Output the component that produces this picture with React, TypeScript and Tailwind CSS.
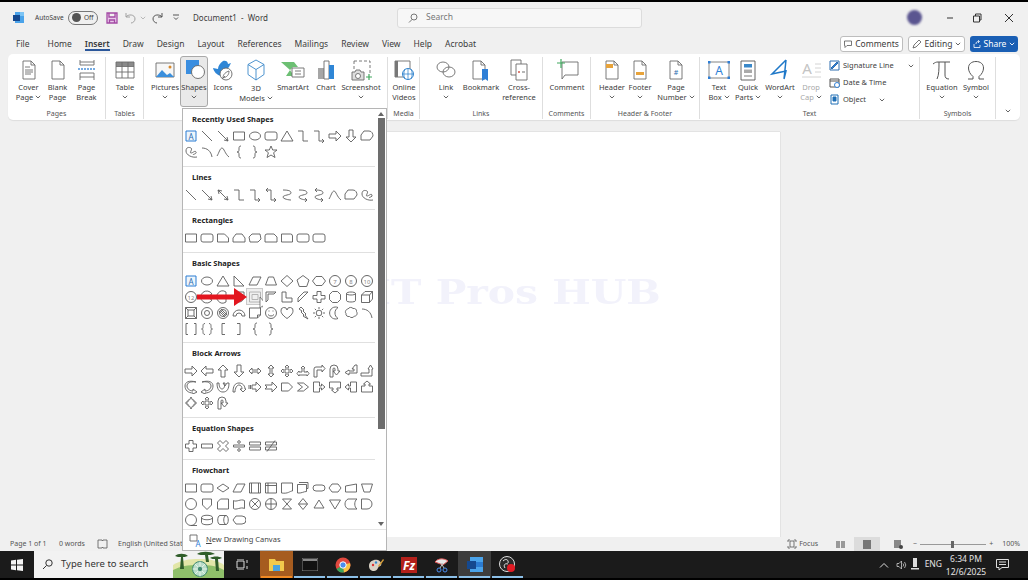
import type { ReactNode } from "react";

const c = (x: number, y: number, r: number) =>
  `M${x - r} ${y}a${r} ${r} 0 1 0 ${2 * r} 0a${r} ${r} 0 1 0 ${-2 * r} 0`;

// outline paths for the shape gallery, all on a 14x14 box
const SHAPES: Record<string, string> = {
  line: "M2 2L12 12",
  arrow: "M2 2L12 12M12 12l-4-1M12 12l-1-4",
  dbl: "M2 2L12 12M2 2l4 1M2 2l1 4M12 12l-4-1M12 12l-1-4",
  rect: "M1.5 3h11v8h-11z",
  ellipse: "M1.5 7a5.5 4 0 1 0 11 0a5.5 4 0 1 0-11 0",
  round: "M3 3h8a2 2 0 0 1 2 2v4a2 2 0 0 1-2 2H3a2 2 0 0 1-2-2V5a2 2 0 0 1 2-2z",
  tri: "M7 2l6 10H1z",
  elbow: "M2 2h5v10h5",
  elbowA: "M2 2h5v10h5M12 12l-2-2M12 12l-2 2",
  elbowD: "M2 2h5v10h5M2 2l2-2M2 2l2 2M12 12l-2-2M12 12l-2 2",
  curveC: "M3 2c6 0 8 1 8 3S3 7 3 9s6 3 8 3",
  curveA: "M3 2c6 0 8 1 8 3S3 7 3 9s6 3 8 3M11 12l-2-2M11 12l-2 2",
  curveD: "M3 2c6 0 8 1 8 3S3 7 3 9s6 3 8 3M11 12l-2-2M11 12l-2 2M3 2l2-2M3 2l2 2",
  arc: "M2 3c5 0 9 3 10 9",
  curve: "M1 11C3 8 4 3 6 3s3 6 7 9",
  free: "M1 11V6l3-4h5c3 0 4 3 4 5l-3 4z",
  scribble: "M13 12C8 13 2 10 2 6s3-4 5-3-2 5 0 5 4-3 5-1-3 2-3 3",
  lbrace: "M9 1C7 1 7 2 7 4s0 3-2 3c2 0 2 1 2 3s0 3 2 3",
  rbrace: "M5 1c2 0 2 1 2 3s0 3 2 3c-2 0-2 1-2 3s0 3-2 3",
  star: "M7 1l1.7 4H13l-3.4 2.7L11 12.500 7 10l-4 2.500 1.400-4.800L1 5h4.300z",
  rArrow: "M1 5h7V2l5 5-5 5V9H1z",
  lArrow: "M13 5H6V2L1 7l5 5V9h7z",
  uArrow: "M5 13V6H2l5-5 5 5H9v7z",
  dArrow: "M5 1v7H2l5 5 5-5H9V1z",
  snip1: "M1.500 3h7l4 4v4h-11z",
  snip2: "M4 3h6l3 4v4H1V7z",
  snipD: "M4 3h8l1 5-3 3H2L1 6z",
  rs: "M3 3h7l3 3v5H1V5a2 2 0 0 1 2-2z",
  r1: "M1.500 3h9a2 2 0 0 1 2 2v6h-11z",
  rtri: "M2 2v10h10z",
  para: "M5 3h8l-4 8H1z",
  trap: "M4.500 3h5l3 8h-11z",
  diamond: "M7 1.500l6 5.500-6 5.500L1 7z",
  pent: "M7 1.500l6 4.500-2.300 6.500H3.300L1 6z",
  hex: "M4 2.500h6l3.500 4.500-3.500 4.500H4L.5 7z",
  oct: "M4.500 1.500h5l3 3v5l-3 3h-5l-3-3v-5z",
  pie: "M12 4A6 6 0 1 0 12 10L7 7z",
  chord: "M10 2A6 6 0 1 0 10 12z",
  tear: "M7 2h5v5a5 5 0 1 1-5-5z",
  frame: "M1.500 2h11v10h-11zM4 4.500h6v5H4z",
  half: "M2 2h10L10 4H4v6l-2 2z",
  lshape: "M2 2h4v6h6v4H2z",
  stripe: "M2 12V8l6-6h4z",
  cross: "M5 1.500h4v4h4v3.500H9v3.500H5V9H1V5.500h4z",
  can: "M2.500 3.500c0-2 9-2 9 0v7c0 2-9 2-9 0zM2.500 3.500c0 2 9 2 9 0",
  cube: "M1.500 5h8v7.500h-8zM1.500 5L5 1.500h7.500V9L9.500 12.500M9.500 5l3-3.500",
  bevel: "M1.500 1.500h11v11h-11zM4 4h6v6H4zM1.500 1.500L4 4M12.500 1.500L10 4M1.500 12.500L4 10M12.500 12.500L10 10",
  donut: c(7, 7, 5.5) + c(7, 7, 2.5),
  no: c(7, 7, 5.5) + c(7, 7, 3.5) + "M4.500 4.500l5 5M3 5l6 6M5 3l6 6",
  block: "M1 10a6 6 0 0 1 12 0h-3a3 3 0 0 0-6 0z",
  fold: "M1.500 2h11v7l-3 3h-8zM12.500 9h-3v3",
  smile: c(7, 7, 5.5) + "M4.500 5h1M8.500 5h1M4 8.500c1.500 2 4.500 2 6 0",
  heart: "M7 12.500C2 9 1 6.500 1 5a3 3 0 0 1 6-1 3 3 0 0 1 6 1c0 1.500-1 4-6 7.500z",
  bolt: "M5 1l3 3-1 1 3 3-1 1 3 4-5-3 1-1-3-3 1-1-3-2z",
  sun: c(7, 7, 2.800) + "M7 1v2M7 11v2M1 7h2M11 7h2M2.800 2.800l1.400 1.400M9.800 9.800l1.400 1.400M2.800 11.200l1.400-1.400M9.800 4.200l1.400-1.400",
  moon: "M10 1.500a6 6 0 1 0 0 11 6.500 6.500 0 0 1 0-11z",
  cloud: "M4 3c1-2 4-2 5-.5 2-.5 4 1 3.500 3 1.500 2 0 5-2 4.500-1 2-4 2-5 .5-2 .5-4-1-3.500-3C.5 6 2 3 4 3z",
  dBracket: "M4 1.500H2v11h2M10 1.500h2v11h-2",
  dBrace: "M5 1.500C3 1.500 3 3 3 4.500S3 7 1.500 7C3 7 3 8 3 9.500s0 3 2 3M9 1.500c2 0 2 1.500 2 3S11 7 12.500 7C11 7 11 8 11 9.500s0 3-2 3",
  lBracket: "M9 1.500H6v11h3",
  rBracket: "M5 1.500h3v11H5",
  lr: "M1 7l3-3v2h6V4l3 3-3 3V8H4v2z",
  ud: "M7 1l3 3H8v6h2l-3 3-3-3h2V4H4z",
  quad: "M7 1l2 2H8v3h3V5l2 2-2 2V8H8v3h1l-2 2-2-2h1V8H3v1L1 7l2-2v1h3V3H5z",
  lru: "M7 2l2 2H8v4h3V7l2 2.500L11 12v-1H3v1L1 9.500 3 7v1h3V4H5z",
  bent: "M2 13V5a2 2 0 0 1 2-2h6V1l3 3.500L10 8V6H5v7z",
  uturn: "M2 13V5a4 4 0 0 1 8 0v2h2l-3.500 4L5 7h2V5a1 1 0 0 0-2 0v8z",
  leftUp: "M13 1v8H5v2L1 8.500 5 6v1h5V5H8l3-4z",
  bentUp: "M1 9h8V5H8l2.500-4L13 5h-1v7H1z",
  cR: "M12 2C6 1 3 3 3 6c0 3 3 5 6 5V9l4 3-4 2v-1C4 13 1 10 1 6s4-6 11-4z",
  cL: "M2 2c6-1 9 1 9 4 0 3-3 5-6 5V9l-4 3 4 2v-1c5 0 8-3 8-7S9 0 2 2z",
  cU: "M1 3c0 6 2 9 6 9s6-3 6-9l-2 0v0l-2 3-2-3h2c0 3-1 6-3 6S3 6 3 3z",
  cD: "M1 12C1 6 3 3 7 3s6 3 6 6h1l-3 3-3-3h2c0-2-1-4-3-4s-4 3-4 7z",
  striped: "M4 5h4V2l5 5-5 5V9H4zM1 5v4M2.500 5v4",
  notched: "M1 5h7V2l5 5-5 5V9H1l2-2z",
  home: "M1.500 3h7l4 4-4 4h-7z",
  chev: "M1.500 3h6l5 4-5 4h-6l5-4z",
  rCall: "M1.500 2h6v4h2V4l3.500 3-3.500 3V8h-2v4h-6z",
  dCall: "M1.500 2h11v6H9v2h1.500L7 13 3.500 10H5V8H1.500z",
  lCall: "M12.500 2h-6v4h-2V4L1 7l3.500 3V8h2v4h6z",
  uCall: "M1.500 12h11V6H9V4h1.500L7 1 3.500 4H5v2H1.500z",
  udCall: "M4 4h1.500L7 1l1.500 3H10v2h2v2h-2v2H8.500L7 13l-1.500-3H4V8H2V6h2z",
  plus: "M5 1.500h4v3.500h3.500v4H9v3.500H5V9H1.500V5H5z",
  minus: "M1.500 5h11v4h-11z",
  times: "M1.500 4L4 1.500l3 3 3-3L12.500 4l-3 3 3 3-2.500 2.500-3-3-3 3L1.500 10l3-3z",
  div: "M1.500 6h11v2h-11z" + c(7, 3, 1.3) + c(7, 11, 1.3),
  eq: "M1.500 3h11v3h-11zM1.500 8h11v3h-11z",
  neq: "M1.500 3h11v3h-11zM1.500 8h11v3h-11zM3 12.500L11 1.500",
  decision: "M7 3l6 4-6 4-6-4z",
  predef: "M1.500 2h11v10h-11zM3.500 2v10M10.500 2v10",
  internal: "M1.500 2h11v10h-11zM1.500 4.500h11M4 2v10",
  doc: "M1.500 2h11v8c-3 0-4 3-11 2z",
  multi: "M3 1.500h9v6h-1M1.500 3.500h9v7c-3 0-5 2-9 1.500z",
  term: "M4 4h6a3 3 0 0 1 0 6H4a3 3 0 0 1 0-6z",
  prep: "M4 3h6l3 4-3 4H4L1 7z",
  manIn: "M1.500 5l11-2v8h-11z",
  manOp: "M1.500 3h11l-2.500 8H4z",
  conn: c(7, 7, 5.5),
  off: "M2.500 2h9v6L7 12.500 2.500 8z",
  card: "M4.500 2h8v10h-11V5z",
  tape: "M1.500 3.500c3 2 7-2 11 0v8c-4-2-8 2-11 0z",
  sum: c(7, 7, 5.5) + "M3.200 3.200l7.600 7.600M10.800 3.200l-7.600 7.600",
  or: c(7, 7, 5.5) + "M1.500 7h11M7 1.500v11",
  collate: "M2.500 2h9L2.500 12h9z",
  sort: "M7 1.500l4.500 5.500L7 12.500 2.500 7zM2.500 7h9",
  extract: "M7 3l5 8H2z",
  merge: "M1.500 3h11L7 12z",
  stored: "M4 2h9c-3 2-3 8 0 10H4C0 10 0 4 4 2z",
  delay: "M1.500 2H7a5 5 0 0 1 0 10H1.500z",
  seq: c(7, 7, 5.5) + "M7 12.500h6",
  disk: "M1.500 4.500c0-3 11-3 11 0v5c0 3-11 3-11 0zM1.500 4.500c0 3 11 3 11 0",
  direct: "M4 2.500h6c3 0 3 9 0 9H4c-3 0-3-9 0-9zM10 2.500c-3 0-3 9 0 9",
  display: "M1 7l3-4h6a4 4 0 0 1 0 8H4z",
};

const Shape = ({ name }: { name: string }) => {
  if (name === "text") {
    return (
      <svg className="h-[14px] w-[14px]" viewBox="0 0 14 14" fill="none">
        <path d="M2 2h10v10H2z" fill="#eef5fb" stroke="#2b7cd3" />
        <text x="7" y="10.500" textAnchor="middle" fontSize="8" fill="#2b6cb0" stroke="none">A</text>
      </svg>
    );
  }
  if (name.startsWith("#")) {
    return (
      <svg className="h-[14px] w-[14px]" viewBox="0 0 14 14" fill="none" stroke="#666">
        <circle cx="7" cy="7" r="5.500" />
        <text x="7" y="9.500" textAnchor="middle" fontSize="6" fill="#888" stroke="none">{name.slice(1)}</text>
      </svg>
    );
  }
  return (
    <svg className="h-[14px] w-[14px]" viewBox="0 0 14 14" fill="none" stroke="#5c5c5c" strokeWidth={0.9}>
      <path d={SHAPES[name]} />
    </svg>
  );
};

const SECTIONS: { title: string; items: string[]; first?: boolean; pb: string }[] = [
  {
    title: "Recently Used Shapes",
    first: true,
    pb: "pb-[6px]",
    items: ["text", "line", "arrow", "rect", "ellipse", "round", "tri", "elbow", "elbowA", "rArrow", "dArrow", "free", "scribble", "arc", "curve", "lbrace", "rbrace", "star"],
  },
  {
    title: "Lines",
    pb: "pb-[6px]",
    items: ["line", "arrow", "dbl", "elbow", "elbowA", "elbowD", "curveC", "curveA", "curveD", "curve", "free", "scribble"],
  },
  {
    title: "Rectangles",
    pb: "pb-[6px]",
    items: ["rect", "round", "snip1", "snip2", "snipD", "rs", "r1", "round", "round"],
  },
  {
    title: "Basic Shapes",
    pb: "pb-[5px]",
    items: [
      "text", "ellipse", "tri", "rtri", "para", "trap", "diamond", "pent", "hex", "#7", "#8", "#10",
      "#12", "pie", "chord", "tear", "frame", "half", "lshape", "stripe", "cross", "oct", "can", "cube",
      "bevel", "donut", "no", "block", "fold", "smile", "heart", "bolt", "sun", "moon", "cloud", "arc",
      "dBracket", "dBrace", "lBracket", "rBracket", "lbrace", "rbrace",
    ],
  },
  {
    title: "Block Arrows",
    pb: "pb-[6px]",
    items: [
      "rArrow", "lArrow", "uArrow", "dArrow", "lr", "ud", "quad", "lru", "bent", "uturn", "leftUp", "bentUp",
      "cR", "cL", "cU", "cD", "striped", "notched", "home", "chev", "rCall", "dCall", "lCall", "uCall",
      "udCall", "quad", "uturn",
    ],
  },
  {
    title: "Equation Shapes",
    pb: "pb-[5px]",
    items: ["plus", "minus", "times", "div", "eq", "neq"],
  },
  {
    title: "Flowchart",
    pb: "",
    items: [
      "rect", "round", "decision", "para", "predef", "internal", "doc", "multi", "term", "prep", "manIn", "manOp",
      "conn", "off", "card", "tape", "sum", "or", "collate", "sort", "extract", "merge", "stored", "delay",
      "seq", "disk", "direct", "display",
    ],
  },
];

const Chev = ({ className = "" }: { className?: string }) => (
  <svg className={`inline-block h-[4px] w-[6px] ${className}`} viewBox="0 0 6 4" fill="none" stroke="#555" strokeWidth={0.9}>
    <path d="M.8.8L3 3l2.200-2.200" />
  </svg>
);

const Ic = ({ w = 22, h = 22, children }: { w?: number; h?: number; children: ReactNode }) => (
  <svg width={w} height={h} viewBox={`0 0 ${w} ${h}`} fill="none" stroke="#6b6b6b" strokeWidth={0.9}>
    {children}
  </svg>
);

const Page = ({ x = 5 }: { x?: number }) => (
  <path d={`M${x} 2h8l4 4v14H${x}zM${x + 8} 2v4h4`} fill="#fff" />
);

const icons: Record<string, ReactNode> = {
  cover: <Ic><Page /><path d="M7 8h5M7 11h8M7 13h8M7 15h6" /></Ic>,
  blank: <Ic><Page /></Ic>,
  pbreak: <Ic><path d="M4 1v5h14V1M4 21v-7h14v7M4 3h14M4 18h14" /><path d="M2 10h18" stroke="#4a90d9" strokeDasharray="2 1" strokeWidth={1.400} /></Ic>,
  table: (
    <Ic>
      <path d="M2 3h18v4H2z" fill="#8a8a8a" stroke="none" />
      <path d="M2 3h18v16H2zM2 7.500h18M2 13h18M8 3v16M14 3v16" />
    </Ic>
  ),
  pictures: (
    <Ic>
      <path d="M2 4h18v14H2z" fill="#f7f7f7" />
      <path d="M2 18l6-7 5 5 3-2 4 4z" fill="#3b8fdc" stroke="none" />
      <circle cx="16" cy="8" r="1.500" fill="#d9892b" stroke="none" />
    </Ic>
  ),
  shapes: (
    <Ic>
      <path d="M3 1h13v14H3z" fill="#3a8ee0" stroke="none" />
      <circle cx="15" cy="13" r="6.500" fill="#fff" stroke="#666" />
    </Ic>
  ),
  icons: (
    <Ic>
      <path d="M1 9l5 1c0-3 2-6 5-8 2-1 5 0 5 3l3-1-2 4-8 9c-4-1-7-4-8-8z" fill="#2f86d6" stroke="none" />
      <circle cx="14" cy="15" r="6" fill="#fff" stroke="#666" />
      <path d="M11 19c0-4 3-6 6-7 0 4-2 6-6 7zM10 20l3-3" />
    </Ic>
  ),
  d3: (
    <Ic>
      <path d="M11 1l8 4.500v10L11 21l-8-5.500v-10zM3 5.500l8 5 8-5M11 10.500V21" stroke="#3a88c9" fill="#fff" />
    </Ic>
  ),
  smart: (
    <Ic w={26}>
      <path d="M1 3h13l4 5H13l-3 3 4 6H6l4-6z" fill="#6cbf73" stroke="none" />
      <path d="M12 9h12v9H12z" fill="#fff" />
      <path d="M15 12h6M15 15h6" />
    </Ic>
  ),
  chart: (
    <Ic>
      <path d="M3 9h6v11H3z" fill="#a6a6a6" stroke="none" />
      <path d="M9 2h5v18H9z" fill="#fff" />
      <path d="M14 6h5v14h-5z" fill="#2f86d6" stroke="none" />
    </Ic>
  ),
  shot: (
    <Ic w={24}>
      <path d="M5 2h16v12" strokeDasharray="3 2" />
      <path d="M5 2v8" strokeDasharray="3 2" />
      <path d="M3 13h3l1-2h4l1 2h3v8H3z" fill="#ddd" />
      <circle cx="9" cy="17" r="2.500" fill="#fff" />
      <path d="M20 15v6M17 18h6" stroke="#41a85f" strokeWidth={1.200} />
    </Ic>
  ),
  video: (
    <Ic w={24}>
      <path d="M3 2h15v16H3z" fill="#fff" />
      <path d="M3 2h3v16H3z" fill="#777" stroke="none" />
      <circle cx="16" cy="15" r="5.500" fill="#fff" stroke="#1f78c8" />
      <path d="M10.500 15h11M16 9.500v11M13 10c-1.500 3-1.500 7 0 10M19 10c1.500 3 1.500 7 0 10" stroke="#1f78c8" strokeWidth={0.7} />
    </Ic>
  ),
  link: (
    <Ic>
      <ellipse cx="8" cy="8" rx="6" ry="5" />
      <ellipse cx="14" cy="13" rx="6" ry="5" />
    </Ic>
  ),
  bookmark: <Ic><Page x={3} /><path d="M12 10h6v12l-3-2-3 2z" fill="#2f7fd6" stroke="none" /></Ic>,
  cross: (
    <Ic>
      <path d="M3 1h10v15H3z" fill="#fff" />
      <path d="M8 5h11v16H8z" fill="#fff" />
      <path d="M10 13h2" stroke="#d4574a" strokeWidth={1.400} />
      <path d="M14 13h3" stroke="#999" strokeWidth={1.400} />
    </Ic>
  ),
  comment: (
    <Ic w={24}>
      <path d="M7 3h16v13H10l-3 4z" fill="#fff" />
      <path d="M6 0v9M2 4h8" stroke="#41a85f" strokeWidth={1.200} />
    </Ic>
  ),
  header: <Ic><Page /><path d="M5 5h7v4H5z" fill="#e8a33a" stroke="none" /></Ic>,
  footer: <Ic><Page /><path d="M7 13h8v3H7z" fill="#e8a33a" stroke="none" /></Ic>,
  num: <Ic><Page /><text x="11" y="16" fontSize="7" textAnchor="middle" fill="#2f6fb0" stroke="none">#</text></Ic>,
  tbox: (
    <Ic>
      <path d="M1 3h20v16H1z" fill="#fff" stroke="#777" />
      <path d="M0 2h2.500v2.500H0zM19.500 2H22v2.500h-2.500zM0 17.500h2.500V20H0zM19.500 17.500H22V20h-2.500z" fill="#2f7fd6" stroke="none" />
      <text x="11" y="16" fontSize="12" textAnchor="middle" fill="#2f7fd6" stroke="none">A</text>
    </Ic>
  ),
  quick: (
    <Ic>
      <path d="M4 2h14v19H4z" fill="#fff" stroke="#555" />
      <path d="M7 5h8v3.500H7z" fill="#3a88c9" stroke="none" />
      <path d="M7 10.500h8v3.500H7z" fill="#aaa" stroke="none" />
      <path d="M7 17h8" />
    </Ic>
  ),
  wordart: <Ic><path d="M17 1L3 15l14-3-2 8M17 1l-2 19" stroke="#1f78c8" strokeWidth={1.500} /></Ic>,
  dropcap: (
    <Ic>
      <text x="7" y="15" fontSize="15" textAnchor="middle" fill="#c4c4c4" stroke="none">A</text>
      <path d="M15 5h6M15 9h6M15 13h6M2 18h19" stroke="#cfcfcf" />
    </Ic>
  ),
  pi: (
    <Ic w={20}>
      <path d="M1 5c2-1.500 3-2 5-2h12M7 3c0 7 0 13-2 17M13 3v13c0 2.500 1 4 4 4" stroke="#555" strokeWidth={1} />
    </Ic>
  ),
  omega: (
    <Ic w={20}>
      <path d="M2 20h5v-2.500C4 15 2.500 12 2.500 9c0-4 3-6.500 7.500-6.500s7.500 2.500 7.500 6.500c0 3-1.500 6-4.500 8.500V20h5" stroke="#555" strokeWidth={1} />
    </Ic>
  ),
};

type BtnProps = {
  w: string;
  icon: ReactNode;
  l1: string;
  l2?: string;
  chev?: boolean;
  muted?: boolean;
  active?: boolean;
  shift?: boolean;
};

const RibbonBtn = ({ w, icon, l1, l2, chev, muted, active, shift }: BtnProps) => (
  <div
    className={`flex h-[49px] shrink-0 flex-col items-center leading-[10px] ${w} ${muted ? "text-[#a8a8a8]" : ""} ${
      active ? "-mt-px h-[51px] rounded-[3px] border border-[#a9a9a9] bg-[#e9e9e9]" : ""
    }`}
  >
    <div className="flex h-[25px] w-full items-center justify-center">{icon}</div>
    <div className={`whitespace-nowrap ${shift ? "mt-px" : ""}`}>{l1}</div>
    <div className="flex h-[10px] items-center gap-[2px] whitespace-nowrap">
      {l2}
      {chev && <Chev />}
    </div>
  </div>
);

const Group = ({ w, label, pl, children }: { w: string; label: string; pl: string; children: ReactNode }) => (
  <div className={`flex h-[62px] shrink-0 flex-col border-r border-[#dedede] ${w}`}>
    <div className={`flex h-[51px] ${pl}`}>{children}</div>
    <div className="h-[11px] text-center text-[7px] leading-[11px] text-[#555]">{label}</div>
  </div>
);

const SmallRow = ({ icon, text, chevClass }: { icon: ReactNode; text: string; chevClass?: string }) => (
  <div className="flex h-[17px] items-center gap-[3px] whitespace-nowrap">
    <span className="w-[11px]">{icon}</span>
    {text}
    {chevClass && <Chev className={chevClass} />}
  </div>
);

const TABS = ["File", "Home", "Insert", "Draw", "Design", "Layout", "References", "Mailings", "Review", "View", "Help", "Acrobat"];

const ShapesMenu = () => (
  <div className="absolute left-[182px] top-[108px] flex h-[443px] w-[205px] flex-col border border-[#b5b5b5] bg-white text-[#222]">
    <div className="flex flex-1">
      <div className="w-[193px]">
        {SECTIONS.map((s) => (
          <div key={s.title} className={`${s.pb} ${s.title === "Flowchart" ? "" : "border-b border-[#e0e0e0]"}`}>
            <div className={`pl-[9px] text-[7.500px] font-bold leading-[20px] ${s.first ? "h-[19px]" : "h-[20px]"}`}>{s.title}</div>
            <div className="grid grid-cols-[repeat(12,16px)]">
              {s.items.map((name, i) => (
                <div key={i} className="flex h-4 w-4 items-center justify-center">
                  <Shape name={name} />
                </div>
              ))}
            </div>
          </div>
        ))}
      </div>
      <div className="ml-[1px] flex w-[10px] flex-col items-center">
        <div className="mt-[3px] h-0 w-0 border-x-[3px] border-b-[4px] border-x-transparent border-b-[#666]" />
        <div className="mt-[2px] h-[311px] w-[7px] bg-[#6d6d6d]" />
        <div className="flex-1" />
        <div className="mb-[3px] h-0 w-0 border-x-[3px] border-t-[4px] border-x-transparent border-t-[#666]" />
      </div>
    </div>
    <div className="flex h-[21px] items-center gap-[4px] border-t border-[#e6e6e6] pl-[6px] text-[7.500px] text-[#444]">
      <svg width="13" height="13" viewBox="0 0 13 13" fill="none" stroke="#666" strokeWidth={0.9}>
        <path d="M1 1h7v6H1z" />
        <text x="9" y="12.500" fontSize="8" fill="#2f7fd6" stroke="none" textAnchor="middle">A</text>
      </svg>
      <span><span className="underline">N</span>ew Drawing Canvas</span>
    </div>
    {/* hovered shape, cursor and the red arrow added on top of the gallery */}
    <div className="absolute left-[63px] top-[179px] h-[17px] w-[17px] border border-[#c9c9c9] bg-[#e4e4e4]/60" />
    <svg className="absolute left-[14px] top-[178px]" width="66" height="24" viewBox="0 0 66 24">
      <path d="M0 7.500h37V1l13 9-13 9v-6.500H0z" fill="#e3161f" />
      <path d="M63 10v11l2.500-2 2 4 1.500-1-2-3.500h3z" fill="#fff" stroke="#555" strokeWidth={0.7} />
    </svg>
  </div>
);

const Task = ({ children, active, orange, line = true }: { children: ReactNode; active?: boolean; orange?: boolean; line?: boolean }) => (
  <div className={`relative flex h-full w-[33px] shrink-0 items-center justify-center ${active ? "bg-[#3d3d3d]" : ""} ${orange ? "bg-[#a65c1f]" : ""}`}>
    {children}
    {line && <div className={`absolute bottom-0 left-[1px] right-[1px] h-[2px] ${orange ? "bg-[#f08a24]" : "bg-[#8cc0e8]"}`} />}
  </div>
);

export default function App() {
  return (
    <div className="relative flex h-[580px] w-[1028px] flex-col overflow-hidden bg-black pb-[2px] pt-[2px] font-['Noto_Sans',sans-serif] text-[#3c3c3c]">
      <div className="flex min-h-0 flex-1 flex-col bg-[#f0f0f0]">
        {/* title bar */}
        <div className="flex h-[31px] shrink-0 items-center text-[8px]">
          <svg className="ml-[12px]" width="13" height="13" viewBox="0 0 13 13">
            <path d="M3 1h9v11H3z" fill="#4aa3ea" />
            <path d="M8 1h4v4H8z" fill="#7cc4f5" />
            <path d="M1 4h7v6H1z" fill="#15498f" />
          </svg>
          <span className="ml-[10px] w-[33px] text-[6.500px]">AutoSave</span>
          <div className="flex h-[14px] w-[30px] items-center rounded-full border border-[#777] pl-[3px] text-[6.500px]">
            <span className="h-[9px] w-[9px] rounded-full bg-[#555]" />
            <span className="ml-[3px]">Off</span>
          </div>
          <svg className="ml-[8px]" width="12" height="12" viewBox="0 0 12 12" fill="none" stroke="#a349a4" strokeWidth={1.300}>
            <path d="M1 1h10v10H1zM3 1v4h6V1M3.500 11V8h5v3" fill="#e8c8ea" />
          </svg>
          <svg className="ml-[7px]" width="12" height="12" viewBox="0 0 12 12" fill="none" stroke="#a0a0a0">
            <path d="M1 1v4h4M1 5c2-3 9-3 9 2 0 2-2 4-4 4" />
          </svg>
          <Chev className="ml-[3px] opacity-40" />
          <svg className="ml-[5px]" width="12" height="12" viewBox="0 0 12 12" fill="none" stroke="#555">
            <path d="M11 1v4H7M11 5C9 2 2 2 2 7c0 2 2 4 4 4" />
          </svg>
          <svg className="ml-[10px]" width="6" height="7" viewBox="0 0 6 7" fill="none" stroke="#555">
            <path d="M0 1h6M1 3.500l2 2 2-2" />
          </svg>
          <span className="ml-[14px] w-[204px]">Document1 &nbsp;-&nbsp; Word</span>
          <div className="flex h-[20px] w-[245px] items-center rounded-[3px] border border-[#dcdcdc] bg-[#f7f7f7] pl-[10px] text-[#777]">
            <svg width="10" height="10" viewBox="0 0 10 10" fill="none" stroke="#777">
              <circle cx="6" cy="4" r="3" />
              <path d="M4 6.500L1 9.500" />
            </svg>
            <span className="ml-[8px] text-[8.500px]">Search</span>
          </div>
          <div className="ml-[265px] h-[15px] w-[15px] rounded-full bg-[#5a5590] blur-[1px]" />
          <svg className="ml-[23px]" width="10" height="10" viewBox="0 0 10 10" stroke="#333">
            <path d="M2 5h6" />
          </svg>
          <svg className="ml-[17px]" width="10" height="10" viewBox="0 0 10 10" fill="none" stroke="#333">
            <path d="M1.500 3h6v6h-6zM3.500 3V1h5.500v6H7.500" />
          </svg>
          <svg className="ml-[22px]" width="10" height="10" viewBox="0 0 10 10" stroke="#333">
            <path d="M1 1l8 8M9 1L1 9" />
          </svg>
        </div>
        {/* tabs */}
        <div className="mt-[2px] flex h-[18px] shrink-0 items-center pl-[16px] pr-[10px] text-[8.500px]">
          <div className="flex gap-[13px]">
            {TABS.map((t) => (
              <span key={t} className={`relative ${t === "File" ? "mr-[5px]" : ""} ${t === "Insert" ? "font-semibold" : ""}`}>
                {t}
                {t === "Insert" && <span className="absolute -bottom-[1px] left-0 right-0 h-[2px] bg-[#2b579a]" />}
              </span>
            ))}
          </div>
          <div className="ml-auto flex h-[16px] w-[63px] items-center justify-center gap-[3px] rounded-[3px] border border-[#bdbdbd] bg-white">
            <svg width="8" height="8" viewBox="0 0 8 8" fill="none" stroke="#555" strokeWidth={0.8}>
              <path d="M.5 1h7v4.500H3L1 7.500V5.500H.5z" />
            </svg>
            Comments
          </div>
          <div className="ml-[5px] flex h-[16px] w-[57px] items-center justify-center gap-[3px] rounded-[3px] border border-[#bdbdbd] bg-white">
            <svg width="10" height="10" viewBox="0 0 10 10" fill="none" stroke="#555" strokeWidth={0.8}>
              <path d="M1 9l1-3 5-5 2 2-5 5z" />
            </svg>
            Editing
            <Chev />
          </div>
          <div className="ml-[5px] flex h-[16px] w-[48px] items-center justify-center gap-[3px] rounded-[3px] bg-[#1a5fb4] text-white">
            <svg width="8" height="8" viewBox="0 0 8 8" fill="none" stroke="#fff" strokeWidth={0.8}>
              <path d="M1 4v3.500h6V5M3 4c0-2 1-2.500 3-2.500M5 .2l1.500 1.300L5 3" />
            </svg>
            Share
            <svg className="h-[4px] w-[6px]" viewBox="0 0 6 4" fill="none" stroke="#fff" strokeWidth={0.9}>
              <path d="M.8.8L3 3l2.200-2.200" />
            </svg>
          </div>
        </div>
        {/* ribbon */}
        <div className="mx-[8px] mt-[1px] flex h-[66px] shrink-0 rounded-[5px] bg-white pt-[3px] text-[7.500px] shadow-[0_1px_1px_rgba(0,0,0,0.08)]">
          <Group w="w-[98px]" label="Pages" pl="pl-[6px]">
            <RibbonBtn w="w-[29px]" icon={icons.cover} l1="Cover" l2="Page" chev />
            <RibbonBtn w="w-[29px]" icon={icons.blank} l1="Blank" l2="Page" />
            <RibbonBtn w="w-[29px]" icon={icons.pbreak} l1="Page" l2="Break" />
          </Group>
          <Group w="w-[38px]" label="Tables" pl="pl-[4px]">
            <RibbonBtn w="w-[30px]" icon={icons.table} l1="Table" chev />
          </Group>
          <Group w="w-[244px]" label="" pl="pl-[6px]">
            <RibbonBtn w="w-[30px]" icon={icons.pictures} l1="Pictures" chev />
            <RibbonBtn w="w-[28px]" icon={icons.shapes} l1="Shapes" chev active />
            <RibbonBtn w="w-[30px]" icon={icons.icons} l1="Icons" />
            <RibbonBtn w="w-[36px]" icon={icons.d3} l1="3D" l2="Models" chev shift />
            <RibbonBtn w="w-[38px]" icon={icons.smart} l1="SmartArt" />
            <RibbonBtn w="w-[28px]" icon={icons.chart} l1="Chart" />
            <RibbonBtn w="w-[42px]" icon={icons.shot} l1="Screenshot" chev />
          </Group>
          <Group w="w-[32px]" label="Media" pl="pl-[3px]">
            <RibbonBtn w="w-[26px]" icon={icons.video} l1="Online" l2="Videos" />
          </Group>
          <Group w="w-[123px]" label="Links" pl="pl-[10px]">
            <RibbonBtn w="w-[32px]" icon={icons.link} l1="Link" chev />
            <RibbonBtn w="w-[38px]" icon={icons.bookmark} l1="Bookmark" />
            <RibbonBtn w="w-[38px]" icon={icons.cross} l1="Cross-" l2="reference" />
          </Group>
          <Group w="w-[48px]" label="Comments" pl="pl-[4px]">
            <RibbonBtn w="w-[40px]" icon={icons.comment} l1="Comment" />
          </Group>
          <Group w="w-[109px]" label="Header & Footer" pl="pl-[7px]">
            <RibbonBtn w="w-[28px]" icon={icons.header} l1="Header" chev />
            <RibbonBtn w="w-[28px]" icon={icons.footer} l1="Footer" chev />
            <RibbonBtn w="w-[44px]" icon={icons.num} l1="Page" l2="Number" chev />
          </Group>
          <Group w="w-[220px]" label="Text" pl="pl-[5px]">
            <RibbonBtn w="w-[28px]" icon={icons.tbox} l1="Text" l2="Box" chev />
            <RibbonBtn w="w-[30px]" icon={icons.quick} l1="Quick" l2="Parts" chev />
            <RibbonBtn w="w-[34px]" icon={icons.wordart} l1="WordArt" chev />
            <RibbonBtn w="w-[28px]" icon={icons.dropcap} l1="Drop" l2="Cap" chev muted />
            <div className="ml-[4px] flex flex-col">
              <SmallRow
                text="Signature Line"
                chevClass="ml-[11px]"
                icon={
                  <svg width="11" height="11" viewBox="0 0 11 11" fill="none" stroke="#2f6fb0">
                    <path d="M1 1h9v9H1z" />
                    <path d="M2 8l6-6 1 1-6 6z" fill="#2f7fd6" />
                  </svg>
                }
              />
              <SmallRow
                text="Date & Time"
                icon={
                  <svg width="11" height="11" viewBox="0 0 11 11" fill="none" stroke="#555">
                    <path d="M1 2h9v8H1zM1 4h9" />
                    <circle cx="8" cy="8" r="2.500" fill="#fff" stroke="#2f7fd6" />
                  </svg>
                }
              />
              <SmallRow
                text="Object"
                chevClass="ml-[10px]"
                icon={
                  <svg width="11" height="11" viewBox="0 0 11 11" fill="none" stroke="#1f6fb5">
                    <path d="M2 1h7v9H2z" />
                    <path d="M4 3h3v4H4z" fill="#1f6fb5" />
                  </svg>
                }
              />
            </div>
          </Group>
          <Group w="w-[76px]" label="Symbols" pl="pl-[5px]">
            <RibbonBtn w="w-[34px]" icon={icons.pi} l1="Equation" chev />
            <RibbonBtn w="w-[34px]" icon={icons.omega} l1="Symbol" chev />
          </Group>
          <div className="flex flex-1 items-end justify-center pb-[7px]">
            <Chev />
          </div>
        </div>
        {/* document */}
        <div className="flex min-h-0 flex-1 justify-center overflow-hidden pt-[12px]">
          <div className="relative w-[532px] bg-white shadow-[0_0_1px_rgba(0,0,0,0.3)]">
            <span className="absolute left-[124px] top-[143px] origin-left scale-x-[1.2] whitespace-nowrap font-['DejaVu_Serif',serif] text-[34px] font-bold leading-none text-[#f2f2fb]">
              IT Pros HUB
            </span>
          </div>
        </div>
        {/* status bar */}
        <div className="flex h-[14px] shrink-0 items-center pl-[10px] text-[7px] text-[#555]">
          <span className="w-[49px]">Page 1 of 1</span>
          <span className="w-[38px]">0 words</span>
          <svg width="11" height="10" viewBox="0 0 11 10" fill="none" stroke="#555" strokeWidth={0.8}>
            <path d="M1 1h4l.5 1L6 1h4v8H6l-.5-1-.5 1H1z" />
          </svg>
          <span className="ml-[10px] whitespace-nowrap">English (United States)</span>
          <div className="ml-auto flex h-full items-center pr-[8px]">
            <svg width="10" height="10" viewBox="0 0 10 10" fill="none" stroke="#555" strokeWidth={0.8}>
              <path d="M3 2h4v6H3zM1 3V1h2M7 1h2v2M1 7v2h2M9 7v2H7" />
            </svg>
            <span className="ml-[2px] mr-[18px]">Focus</span>
            <svg className="mr-[9px]" width="9" height="9" viewBox="0 0 9 9" fill="#999"><path d="M0 1h4v7H0zM5 1h4v7H5z" /></svg>
            <div className="flex h-full w-[26px] items-center justify-center bg-[#dcdcdc]">
              <svg width="8" height="9" viewBox="0 0 8 9" fill="#777"><path d="M0 0h8v9H0z" /></svg>
            </div>
            <svg className="ml-[14px]" width="9" height="10" viewBox="0 0 9 10" fill="#888"><path d="M0 1h7v8H0z" /><circle cx="7" cy="8" r="2" fill="#444" /></svg>
            <span className="ml-[10px]">−</span>
            <div className="relative mx-[3px] h-px w-[66px] bg-[#999]">
              <div className="absolute left-[31px] top-[-3px] h-[7px] w-[3px] bg-[#666]" />
            </div>
            <span>+</span>
            <span className="ml-[9px]">100%</span>
          </div>
        </div>
      </div>
      {/* taskbar */}
      <div className="flex h-[27px] shrink-0 items-center bg-[#1b1b1b] text-[#e4e4e4]">
        <div className="flex w-[34px] justify-center">
          <svg width="12" height="12" viewBox="0 0 12 12" fill="#f2f2f2"><path d="M0 1.500l5-.7V5.500H0zM6 .7L12 0v5.500H6zM0 6.500h5v4.700l-5-.7zM6 6.500h6V12l-6-.8z" /></svg>
        </div>
        <div className="flex h-full w-[190px] items-center bg-[#f2f2f2] pl-[8px] text-[#333]">
          <svg width="11" height="11" viewBox="0 0 11 11" fill="none" stroke="#333">
            <circle cx="7" cy="4" r="3.200" />
            <path d="M4.500 6.500L1 10" />
          </svg>
          <span className="ml-[8px] text-[9.500px]">Type here to search</span>
          <svg className="ml-auto" width="51" height="27" viewBox="0 0 51 27">
            <path d="M0 27V14c8-5 16-6 26-6s18 1 25 6v13z" fill="#e2e6a8" />
            <path d="M0 27v-8c8-4 14-5 26-5s18 1 25 5v8z" fill="#8fbf6a" />
            <path d="M2 5c3-3 10-3 13 0-3 1-4 1-5 1l1 12H7L8 6C6 6 4 6 2 5z" fill="#2f5d2a" />
            <path d="M24 3c4-3 13-3 18 0-4 1-6 1-7 1l1 7h-3l-1-7c-3 0-6 0-8-1zM37 7c3-2 9-2 12 0-2 1-3 1-4 1l1 12h-3l-1-12c-2 0-3 0-5-1z" fill="#2f5d2a" />
            <circle cx="27" cy="18" r="7.500" fill="#b9dcc9" stroke="#3f8a70" />
            <path d="M27 10.500v15M19.500 18h15M22 13l10 10M32 13L22 23" stroke="#eef7ef" strokeWidth={0.8} />
            <circle cx="27" cy="18" r="2.200" fill="#3f8a70" />
          </svg>
        </div>
        <div className="flex h-full w-[36px] items-center justify-center">
          <svg width="12" height="11" viewBox="0 0 12 11" fill="none" stroke="#ddd"><path d="M1 2h7v7H1zM1 0h7M1 11h7M11 1v3M11 7v3" /></svg>
        </div>
        <Task orange>
          <svg width="15" height="13" viewBox="0 0 15 13"><path d="M0 1h6l1 2h8v10H0z" fill="#f2c94c" /><path d="M4 7h7v6H4z" fill="#4aa3df" /></svg>
        </Task>
        <Task>
          <svg width="16" height="13" viewBox="0 0 16 13"><path d="M0 0h16v13H0z" fill="#111" stroke="#888" /><path d="M1 1h14v2H1z" fill="#888" /></svg>
        </Task>
        <Task>
          <svg width="16" height="16" viewBox="0 0 16 16">
            <circle cx="8" cy="8" r="7.500" fill="#e0483e" />
            <path d="M8 8L1.500 12A7.500 7.500 0 0 0 9 15.500z" fill="#3ba55d" />
            <path d="M8 8l7 -2A7.500 7.500 0 0 1 9 15.500z" fill="#f6c344" />
            <circle cx="8" cy="8" r="3.200" fill="#4a8df0" stroke="#fff" />
          </svg>
        </Task>
        <Task>
          <svg width="16" height="16" viewBox="0 0 16 16">
            <path d="M1 9c0-5 5-7 9-6 4 2 4 6 2 6-2 0-2 5-6 5-3 0-5-2-5-5z" fill="#d9d2c5" />
            <circle cx="5" cy="8" r="1.200" fill="#d33" />
            <circle cx="8" cy="5.500" r="1.200" fill="#38c" />
            <path d="M10 9l5-7 1 1-5 7z" fill="#d9a13a" />
          </svg>
        </Task>
        <Task>
          <svg width="16" height="16" viewBox="0 0 16 16">
            <path d="M0 0h16v16H0z" fill="#b3201b" />
            <text x="8" y="13" textAnchor="middle" fontSize="12" fontWeight="700" fontStyle="italic" fill="#fff">Fz</text>
          </svg>
        </Task>
        <Task>
          <svg width="16" height="16" viewBox="0 0 16 16" fill="none">
            <path d="M1 5c3-4 9-4 13-1L9 8z" fill="#e8e8e8" stroke="#d55" />
            <circle cx="5" cy="13" r="2" stroke="#4a8df0" />
            <circle cx="11" cy="13" r="2" stroke="#4a8df0" />
            <path d="M6 11l3-5M10 11L7 6" stroke="#bbb" />
          </svg>
        </Task>
        <Task active>
          <svg width="16" height="15" viewBox="0 0 16 15">
            <path d="M3 0h13v15H3z" fill="#4aa3ea" />
            <path d="M3 5h13v5H3z" fill="#2b7cd3" />
            <path d="M0 4h9v8H0z" fill="#15498f" />
          </svg>
        </Task>
        <Task>
          <svg width="17" height="17" viewBox="0 0 17 17" fill="none">
            <circle cx="8" cy="8" r="7.500" fill="#2a2a2a" stroke="#ddd" />
            <path d="M4 5c3-3 6-1 5 2M6 12c-2-3 0-5 3-4" stroke="#ddd" />
            <circle cx="12" cy="12" r="4" fill="#e01b24" />
          </svg>
        </Task>
        <div className="ml-auto flex h-full items-center pr-[19px] text-[8.500px]">
          <svg width="10" height="6" viewBox="0 0 10 6" fill="none" stroke="#ddd"><path d="M1 5.500l4-4 4 4" /></svg>
          <svg className="ml-[7px]" width="11" height="10" viewBox="0 0 11 10" fill="none" stroke="#ccc" strokeWidth={0.8}><path d="M1 3.500h2L5.500 1v8L3 6.500H1zM7 3.500a2 2 0 0 1 0 3M8.500 2a4.500 4.500 0 0 1 0 6" /></svg>
          <svg className="ml-[4px]" width="8" height="13" viewBox="0 0 8 13" fill="#ddd"><path d="M2 0h4v9H2zM0 10h8v1.500H0z" /></svg>
          <span className="ml-[6px]">ENG</span>
          <div className="ml-[5px] flex w-[38px] flex-col items-center text-[8.500px] leading-[13px]">
            <span>6:34 PM</span>
            <span>12/6/2025</span>
          </div>
          <svg className="ml-[11px]" width="13" height="12" viewBox="0 0 13 12" fill="none" stroke="#ddd"><path d="M.5.5h12v8H6L3 11V8.500H.5zM3 3h7M3 5.500h7" /></svg>
        </div>
      </div>
      <ShapesMenu />
    </div>
  );
}
